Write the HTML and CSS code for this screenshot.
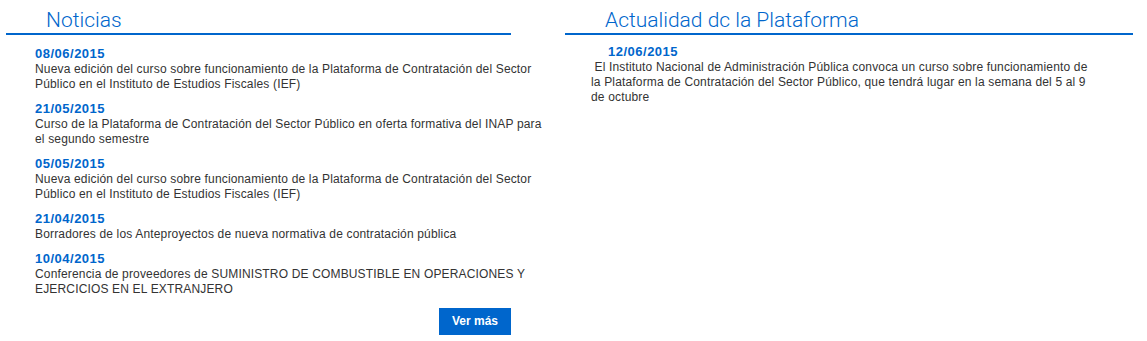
FILE: index.html
```html
<!DOCTYPE html>
<html lang="es">
<head>
    <meta charset="UTF-8">
    <title>Noticias</title>
    <link rel="stylesheet" href="styles.css">
</head>
<body>
    <div class="columns">
        <!-- Noticias -->
        <div class="col col-news">
            <h2 class="col-title">Noticias</h2>
            <ul class="news-list">
                <li class="news-item">
                    <span class="news-date">08/06/2015</span>
                    <a href="#" class="news-text">Nueva edición del curso sobre funcionamiento de la Plataforma de Contratación del Sector Público en el Instituto de Estudios Fiscales (IEF)</a>
                </li>
                <li class="news-item">
                    <span class="news-date">21/05/2015</span>
                    <a href="#" class="news-text">Curso de la Plataforma de Contratación del Sector Público en oferta formativa del INAP para el segundo semestre</a>
                </li>
                <li class="news-item">
                    <span class="news-date">05/05/2015</span>
                    <a href="#" class="news-text">Nueva edición del curso sobre funcionamiento de la Plataforma de Contratación del Sector Público en el Instituto de Estudios Fiscales (IEF)</a>
                </li>
                <li class="news-item">
                    <span class="news-date">21/04/2015</span>
                    <a href="#" class="news-text">Borradores de los Anteproyectos de nueva normativa de contratación pública</a>
                </li>
                <li class="news-item">
                    <span class="news-date">10/04/2015</span>
                    <a href="#" class="news-text">Conferencia de proveedores de SUMINISTRO DE COMBUSTIBLE EN OPERACIONES Y EJERCICIOS EN EL EXTRANJERO</a>
                </li>
            </ul>
            <div class="more">
                <a href="#" class="btn-more">Ver más</a>
            </div>
        </div>

        <!-- Actualidad -->
        <div class="col col-news-right">
            <h2 class="col-title">Actualidad dc la Plataforma</h2>
            <div class="update">
                <span class="update-date">12/06/2015</span>
                <p class="update-text">&nbsp;El Instituto Nacional de Administración Pública convoca un curso sobre funcionamiento de la Plataforma de Contratación del Sector Público, que tendrá lugar en la semana del 5 al 9 de octubre</p>
            </div>
        </div>
    </div>
</body>
</html>
```

FILE: styles.css
```css
* {
    margin: 0;
    padding: 0;
    box-sizing: border-box;
}

body {
    font-family: "Liberation Sans", Arial, sans-serif;
    font-size: 12px;
    color: #333;
    background: #fff;
}

.columns {
    display: flex;
    gap: 19px;
    padding-left: 6px;
}

.col-news {
    width: 540px;
}

.col-news-right {
    width: 568px;
}

.col-title {
    font-family: Roboto, sans-serif;
    font-weight: 300;
    font-size: 21px;
    line-height: 25px;
    color: #0066cc;
    padding: 8px 0 0 40px;
    border-bottom: 2px solid #0066cc;
}

.col-news .col-title {
    width: 505px;
}

.news-list {
    list-style: none;
    padding: 11px 0 0 29px;
}

.news-item {
    margin-bottom: 9px;
}

.news-date,
.update-date {
    display: block;
    font-size: 13px;
    font-weight: bold;
    line-height: 16px;
    letter-spacing: 0.5px;
    color: #0066cc;
}

.news-text {
    display: block;
    line-height: 15px;
    letter-spacing: 0.16px;
    color: #333;
    text-decoration: none;
}

.news-text:hover {
    text-decoration: underline;
}

.more {
    width: 505px;
    display: flex;
    justify-content: flex-end;
    padding-top: 2px;
}

.btn-more {
    display: block;
    background: #0066cc;
    color: #fff;
    font-weight: bold;
    font-size: 12px;
    line-height: 27px;
    padding: 0 13px;
    text-decoration: none;
}

.update {
    padding: 9px 0 0 26px;
}

.update-date {
    padding-left: 17px;
}

.update-text {
    width: 497px;
    line-height: 15px;
    letter-spacing: 0.16px;
}
```
